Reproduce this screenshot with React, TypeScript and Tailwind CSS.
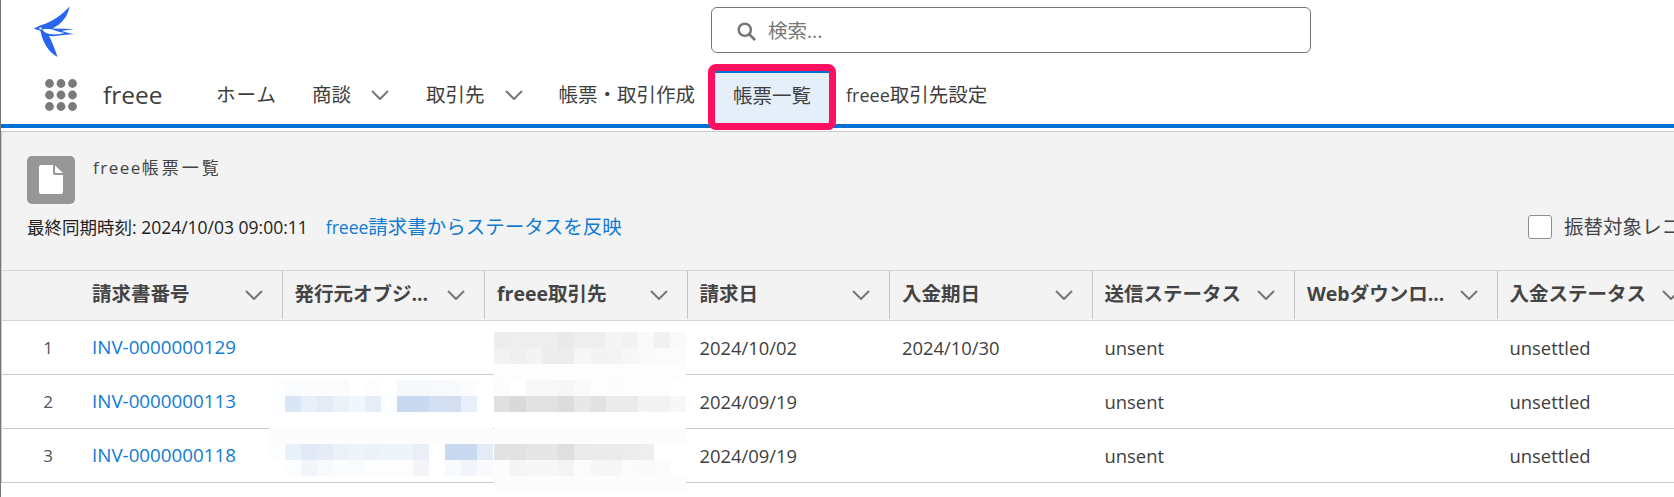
const FONT = '[font-family:"Open_Sans","Noto_Sans_CJK_JP",sans-serif]';

const bar = (c: string) => Array(12).fill(c) as string[];
const barWide = (c: string) => Array(14).fill(c) as string[];

// redacted cells over the table, 16px mosaic
const GREY_ROWS = [
  ['#ededed', '#eeeeee', '#eeeeee', '#eeeeee', '#e9e9e9', '#eeeeee', '#eeeeee', '#f5f5f5', '#f2f2f2', '#f9f9f9', '#f1f1f1', '#f9f9f9'],
  ['#f2f2f2', '#efefef', '#f3f3f3', '#ededed', '#ececec', '#f6f6f6', '#f3f3f3', '#f4f4f4', '#f7f7f7', '#f9f9f9', '#fbfbfb', '#fbfbfb'],
  bar('#fdfdfd'),
  ['#fcfcfc', '#ffffff', '#f8f8f8', '#f8f8f8', '#f7f7f7', '#fafafa', '#fdfdfd', '#fcfcfc', '#fdfdfd', '#fdfdfd', '#fdfdfd', '#ffffff'],
  ['#e0e0e0', '#d9d9d9', '#e2e2e2', '#e1e1e1', '#dcdcdc', '#e8e8e8', '#e2e2e2', '#ebebeb', '#ebebeb', '#f3f3f3', '#f2f2f2', '#f7f7f7'],
  bar('#ffffff'),
  bar('#fcfcfc'),
  ['#e2e2e2', '#e2e2e2', '#e6e6e6', '#e6e6e6', '#dfdfdf', '#eaeaea', '#ebebeb', '#ebebeb', '#ececec', '#eeeeee', '#ffffff', '#ffffff'],
  ['#fcfcfc', '#f5f5f5', '#f7f7f7', '#f7f7f7', '#f4f4f4', '#fbfbfb', '#f7f7f7', '#f6f6f6', '#fbfbfb', '#fafafa', '#fbfbfb', '#ffffff'],
  bar('#fcfcfc'),
];

const BLUE_ROWS_A = [
  ['#fefeff', '#f9fcff', '#fbfcfe', '#fdfcfd', '#fbfbfc', '#ffffff', '#fcfdfe', '#ffffff', '#f6f9fc', '#f6f9fc', '#f7fafd', '#f8fafd', '#fbfcfe', '#ffffff'],
  ['#fdfeff', '#d9e6f5', '#e8eff9', '#e4ebf7', '#ecf1f9', '#f1f5fc', '#e6edf8', '#fdfeff', '#c8d8f0', '#c9d9f0', '#d3dff2', '#d3dff1', '#e8effa', '#ffffff'],
];

const BLUE_ROWS_B = [
  barWide('#fcfcfc'),
  ['#fbfdfe', '#e8f0f9', '#e2eaf8', '#e6ecf7', '#ebf0f9', '#eff3fa', '#edf2fa', '#eff4fb', '#eff4fb', '#eaeff7', '#ffffff', '#c8d8f0', '#c9d9f0', '#e4ebf7'],
  ['#ffffff', '#fcfdfe', '#f2f6fa', '#f7fafc', '#fbfcfd', '#fafbfd', '#fcfdfe', '#fdfdfe', '#fdfdfe', '#f3f5f9', '#ffffff', '#f8fbfe', '#f2f6fc', '#f9fafd'],
];

const COLUMNS = [
  '請求書番号',
  '発行元オブジ...',
  'freee取引先',
  '請求日',
  '入金期日',
  '送信ステータス',
  'Webダウンロ...',
  '入金ステータス',
];

const ROWS = [
  { no: '1', inv: 'INV-0000000129', date: '2024/10/02', due: '2024/10/30' },
  { no: '2', inv: 'INV-0000000113', date: '2024/09/19', due: '' },
  { no: '3', inv: 'INV-0000000118', date: '2024/09/19', due: '' },
];

function Chevron({ className }: { className?: string }) {
  return (
    <svg viewBox="0 0 18 10" fill="none" className={`h-[10px] w-[18px] shrink-0 ${className ?? ''}`} aria-hidden="true">
      <path d="M1 1 L9 9 L17 1" stroke="#767676" strokeWidth="2" />
    </svg>
  );
}

function Bird() {
  return (
    <svg viewBox="8 6 42 52" className="h-[52px] w-[42px]" aria-hidden="true">
      <path
        fill="#2764f0"
        d="M8.5 28.7 C11.5 27.4 13.5 25.8 16.5 25 C27 22 37 15 44.5 6.5 C43 16 37 24 27.5 28.4 L49 29 L36.5 31 C40 32 45 33.5 49 34 L34 35.6 C29.5 36.5 26.5 36.4 24 35.8 C27 42 30 49 32.5 57 C24 52 18 44 15.5 31 C13.5 29.8 11 29.2 8.5 28.7 Z"
      />
      <path fill="#ffffff" d="M17 29.5 C22 28.6 26 29 30 30.4 C33 31.4 36 32.4 40 33 C34 34.6 27 35 23 33.6 C20.5 32.8 18.5 31.4 17 29.5 Z" />
      <circle cx="15.5" cy="28.4" r="1.2" fill="#ffffff" />
    </svg>
  );
}

function Waffle() {
  const pos = [4.5, 16, 27.5];
  return (
    <svg viewBox="0 0 32 32" className="h-8 w-8 shrink-0" aria-hidden="true">
      {pos.map((y) => pos.map((x) => <circle key={`${x}-${y}`} cx={x} cy={y} r="4.4" fill="#7a7a7a" />))}
    </svg>
  );
}

function Mosaic({ className, rows }: { className: string; rows: string[][] }) {
  return (
    <div className={`absolute flex flex-col ${className}`}>
      {rows.map((row, i) => (
        <div key={i} className="flex">
          {row.map((c, j) => (
            <div key={j} className="h-4 w-4" style={{ backgroundColor: c }} />
          ))}
        </div>
      ))}
    </div>
  );
}

export default function App() {
  return (
    <div className={`relative h-[497px] w-[1674px] overflow-hidden border-l border-[#777777] bg-white text-[#3e3e3c] ${FONT}`}>
      {/* search row */}
      <div className="flex h-16 pl-8">
        <div className="mt-[6px]">
          <Bird />
        </div>
        <div className="ml-[636px] mt-[7px] flex h-[46px] w-[600px] items-center rounded-md border border-[#777777] pl-[25px] pt-[2px]">
          <svg viewBox="0 0 20 20" fill="none" className="h-[19px] w-[19px]" aria-hidden="true">
            <circle cx="8.2" cy="8.2" r="6.4" stroke="#757575" strokeWidth="2.6" />
            <path d="M13 13 L19 19" stroke="#757575" strokeWidth="2.8" />
          </svg>
          <span className="ml-[12px] text-[19.5px] text-[#777777]">検索...</span>
        </div>
      </div>

      {/* app nav */}
      <div className="flex h-[60px] items-center pl-11 pt-[2px] text-[19.5px]">
        <Waffle />
        <span className="ml-[26px] w-[113px] text-[24.5px] leading-none">freee</span>
        <span className="w-[96px] tracking-[1px]">ホーム</span>
        <span>商談</span>
        <Chevron className="ml-[20px]" />
        <span className="ml-[37px]">取引先</span>
        <Chevron className="ml-[20px]" />
        <span className="ml-[36px]">帳票・取引作成</span>
        <div className="relative ml-[20px] mt-[5px] flex h-[52px] w-[114px] items-center justify-center self-start border-t-2 border-[#0070d2] bg-[#e5eff9] pb-[5px]">
          <span>帳票一覧</span>
          <div className="absolute -bottom-[7px] -left-[7px] -right-[7px] -top-[9px] z-10 rounded-[8px] border-[7px] border-[#ff0f5f]" />
        </div>
        <span className="ml-[17px]">
          <span className="text-[18px]">freee</span>取引先設定
        </span>
      </div>
      <div className="h-1 bg-[#0070d2]" />
      <div className="h-[3px] bg-white" />

      {/* list header */}
      <div className="border-l border-[#c9c9c9]">
        <div className="flex h-[139px] flex-col border-t border-[#c9c9c9] bg-[#f3f3f3] pl-[25px] pt-6">
          <div className="flex gap-[18px]">
            <div className="flex h-12 w-12 items-center justify-center rounded-[5px] bg-[#969696]">
              <svg viewBox="0 0 48 48" className="h-12 w-12" aria-hidden="true">
                <path fill="#ffffff" d="M14 9 H26 V17 a2 2 0 0 0 2 2 H36 V36 a2 2 0 0 1 -2 2 H14 a2 2 0 0 1 -2 -2 V11 a2 2 0 0 1 2 -2 Z" />
                <path fill="#ffffff" d="M28 9.5 L36 17 H29 a1 1 0 0 1 -1 -1 Z" />
              </svg>
            </div>
            <span className="text-[17px] leading-6 tracking-[3px] text-[#444444]">
              <span className="tracking-[1.5px]">freee</span>帳票一覧
            </span>
          </div>
          <div className="mt-[11px] flex h-6 items-center">
            <span className="text-[17.5px] text-[#222222]">最終同期時刻: 2024/10/03 09:00:11</span>
            <span className="ml-[18px] text-[19.5px] text-[#0f7bd4]">
              <span className="text-[17.5px]">freee</span>請求書からステータスを反映
            </span>
            <div className="ml-auto flex w-[146px] shrink-0 items-center overflow-hidden">
              <div className="h-6 w-6 shrink-0 rounded-[3px] border border-[#8f8f8f] bg-white" />
              <span className="ml-3 whitespace-nowrap text-[19.5px] text-[#444444]">振替対象レコード</span>
            </div>
          </div>
        </div>

        {/* table */}
        <div className="grid h-[51px] grid-cols-[280.5px_repeat(7,202.5px)] border-y border-[#d4d4d4] bg-[#f3f3f3]">
          {COLUMNS.map((col, i) => (
            <div
              key={col}
              className={`flex h-[48px] items-center justify-between border-r border-[#c4c4c4] pb-[3px] pr-[19px] text-[19.5px] font-bold text-[#444444] ${i === 0 ? 'pl-[90px]' : 'pl-[12px]'}`}
            >
              <span className="whitespace-nowrap">{col}</span>
              <Chevron className="mt-[3px]" />
            </div>
          ))}
        </div>
        {ROWS.map((row) => (
          <div key={row.no} className="grid h-[54px] grid-cols-[91px_189.5px_repeat(7,202.5px)] items-center border-b border-[#c9c9c9] text-[18.4px]">
            <span className="pl-[1px] text-center text-[17px] text-[#555555]">{row.no}</span>
            <span className="-ml-[1px] text-[18.8px] text-[#0f7bd4]">{row.inv}</span>
            <span />
            <span />
            <span className="pl-[12px]">{row.date}</span>
            <span className="pl-[12px]">{row.due}</span>
            <span className="pl-[12px]">unsent</span>
            <span />
            <span className="pl-[12px]">unsettled</span>
          </div>
        ))}
      </div>

      <Mosaic className="left-[493px] top-[332px] bg-white" rows={GREY_ROWS} />
      <Mosaic className="left-[268px] top-[380px]" rows={BLUE_ROWS_A} />
      <Mosaic className="left-[268px] top-[428px]" rows={BLUE_ROWS_B} />
    </div>
  );
}
